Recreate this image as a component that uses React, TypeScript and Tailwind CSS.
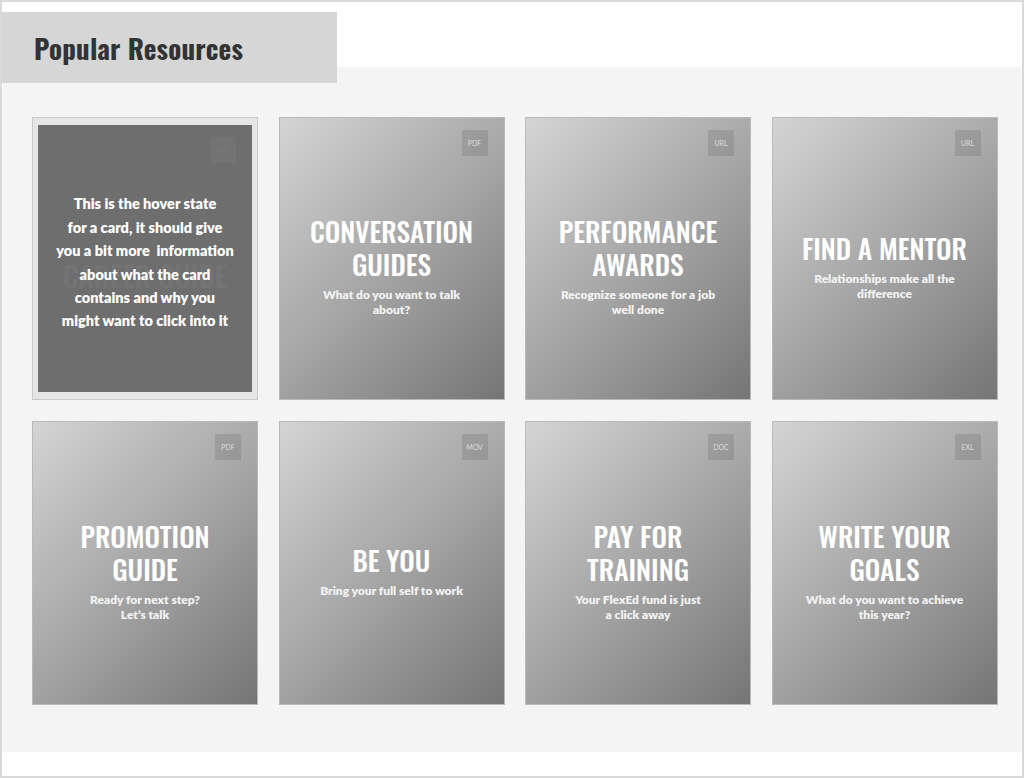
import React from 'react';

type Resource = {
  title: string[];
  subtitle: string[];
  kind: string;
};

const resources: Resource[] = [
  { title: ['CAREER GUIDE'], subtitle: [], kind: 'PDF' },
  { title: ['CONVERSATION', 'GUIDES'], subtitle: ['What do you want to talk', 'about?'], kind: 'PDF' },
  { title: ['PERFORMANCE', 'AWARDS'], subtitle: ['Recognize someone for a job', 'well done'], kind: 'URL' },
  { title: ['FIND A MENTOR'], subtitle: ['Relationships make all the', 'difference'], kind: 'URL' },
  { title: ['PROMOTION', 'GUIDE'], subtitle: ['Ready for next step?', 'Let\u2019s talk'], kind: 'PDF' },
  { title: ['BE YOU'], subtitle: ['Bring your full self to work'], kind: 'MOV' },
  { title: ['PAY FOR', 'TRAINING'], subtitle: ['Your FlexEd fund is just', 'a click away'], kind: 'DOC' },
  { title: ['WRITE YOUR', 'GOALS'], subtitle: ['What do you want to achieve', 'this year?'], kind: 'EXL' },
];

const condensed = "font-['Oswald','Liberation_Sans_Narrow','DejaVu_Sans_Condensed',sans-serif]";
const body = "font-['Lato','Open_Sans',sans-serif]";

function KindBadge({ kind, dim }: { kind: string; dim?: boolean }) {
  return (
    <div
      className={
        'absolute top-[12px] right-[16px] w-[26px] h-[26px] flex items-center justify-center text-[7px] font-[Lato,sans-serif] ' +
        (dim ? 'bg-[#737373] text-[#7a7a7a]' : 'bg-black/10 text-[#dcdcdc]')
      }
    >
      {kind}
    </div>
  );
}

function ResourceCard({ item }: { item: Resource }) {
  return (
    <div className="relative h-full border border-[#b9b9b9] bg-[linear-gradient(135deg,#d4d4d4_0%,#a6a6a6_50%,#757575_100%)] flex flex-col items-center justify-center pt-[14px] text-center">
      <KindBadge kind={item.kind} />
      <div className={condensed + ' text-white text-[27.5px] leading-[33px] font-medium'}>
        {item.title.map((t) => (
          <div key={t}>{t}</div>
        ))}
      </div>
      <div className={body + ' mt-[7px] text-[#f2f2f2] text-[12px] leading-[15px] font-extrabold'}>
        {item.subtitle.map((s) => (
          <div key={s}>{s}</div>
        ))}
      </div>
    </div>
  );
}

function HoverCard({ item }: { item: Resource }) {
  return (
    <div className="h-full border border-[#c9c9c9] bg-[#e6e6e6] px-[5px] py-[7px]">
      <div className="relative h-full bg-[#6e6e6e] flex items-center justify-center text-center">
        <KindBadge kind={item.kind} dim />
        <div className={condensed + ' absolute inset-x-0 top-[133px] text-[#747474] text-[29px] leading-[33px] font-medium'}>
          {item.title[0]}
        </div>
        <p className={body + ' relative text-white text-[14.5px] leading-[23.4px] font-extrabold pt-[8px]'}>
          This is the hover state
          <br />
          for a card, it should give
          <br />
          you a bit more&nbsp; information
          <br />
          about what the card
          <br />
          contains and why you
          <br />
          might want to click into it
        </p>
      </div>
    </div>
  );
}

export default function App() {
  return (
    <div className="w-[1024px] h-[778px] border-2 border-[#d9d9d9] bg-white overflow-hidden">
      <div className="relative z-10 mt-[10px] w-[335px] h-[71px] bg-[#d6d6d6] flex items-center pl-[32px] pt-[1px]">
        <h1 className={condensed + ' text-[27px] font-bold text-[#333333] tracking-[0.2px]'}>Popular Resources</h1>
      </div>
      <section className="-mt-[16px] mx-px h-[685px] bg-[#f4f4f4] pt-[50px] pl-[29px]">
        <div className="grid grid-cols-[repeat(4,226px)] grid-rows-[283px_284px] gap-x-[20.5px] gap-y-[21px]">
          {resources.map((r, i) =>
            i === 0 ? <HoverCard key={r.kind + i} item={r} /> : <ResourceCard key={r.kind + i} item={r} />
          )}
        </div>
      </section>
    </div>
  );
}
